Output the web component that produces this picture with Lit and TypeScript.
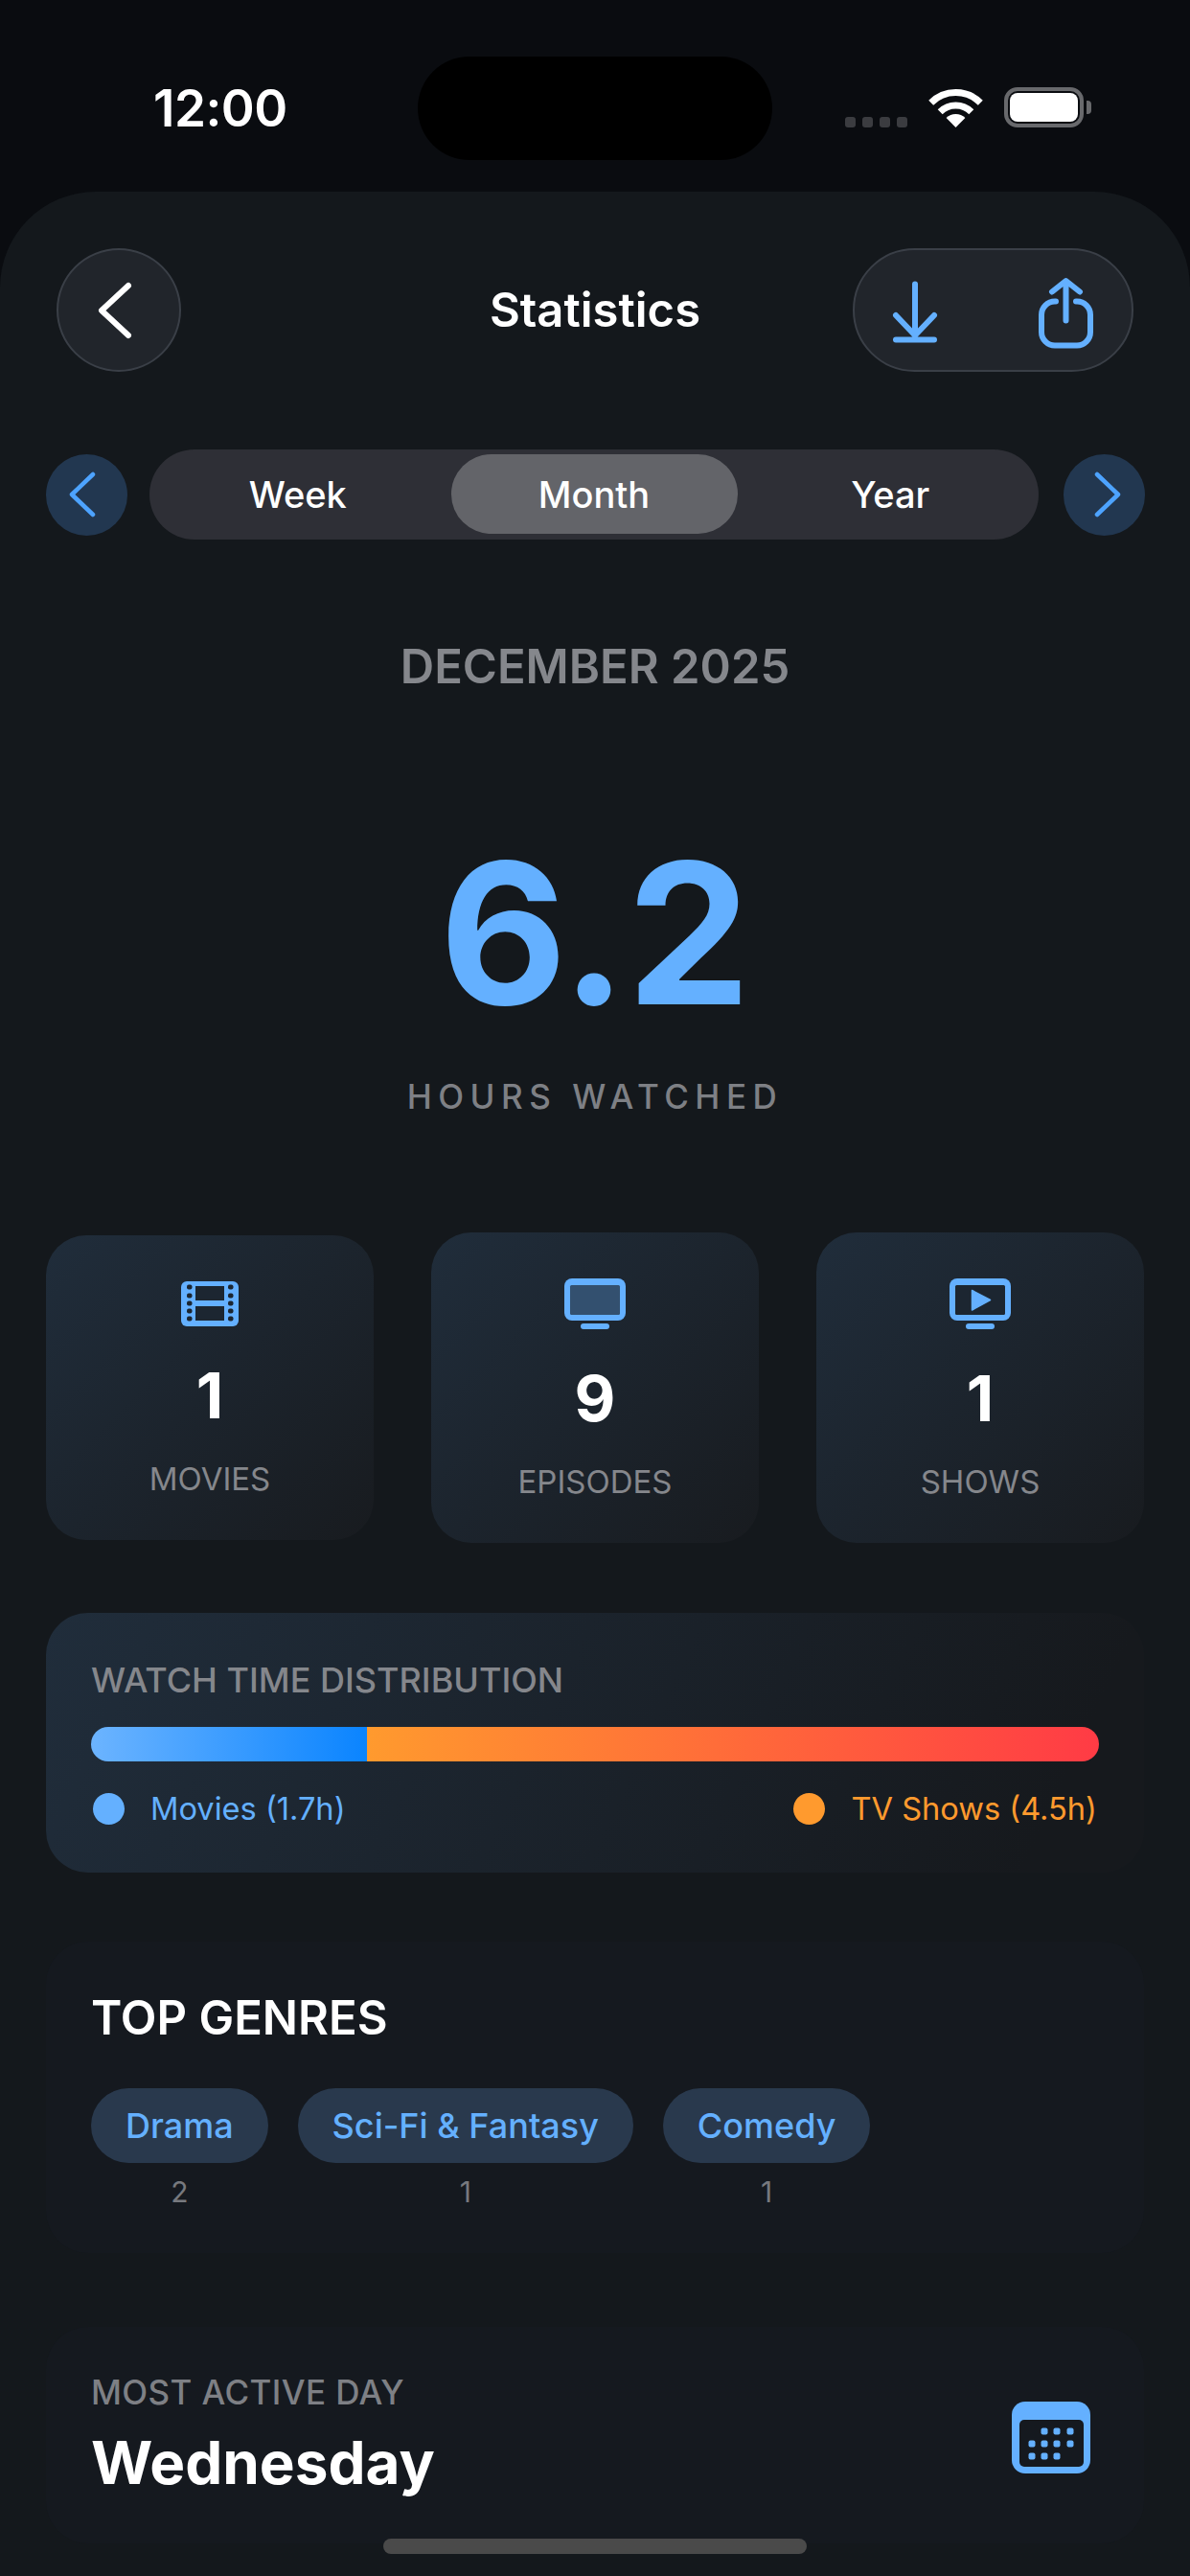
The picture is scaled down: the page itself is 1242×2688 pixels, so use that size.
import { LitElement, css, html, svg } from 'lit';
import { customElement } from 'lit/decorators.js';

const BLUE = '#64b0ff';

const filmIcon = html`<svg width="60" height="47" viewBox="0 0 60 47">
  <rect width="60" height="47" rx="6" fill=${BLUE} />
  <rect x="15" y="5" width="30" height="15" fill="#1c2631" />
  <rect x="15" y="26" width="30" height="15" fill="#1c2631" />
  ${[6, 15, 23, 31, 39].map(
    (y) => svg`<rect x="6" y=${y - 2.5} width="5.5" height="5" rx="2" fill="#1c2631" />
      <rect x="49" y=${y - 2.5} width="5.5" height="5" rx="2" fill="#1c2631" />`
  )}
</svg>`;

const tvIcon = (screen: string, play: boolean) => html`<svg width="64" height="53" viewBox="0 0 64 53">
  <rect width="64" height="44" rx="8" fill=${BLUE} />
  <rect x="6" y="7" width="52" height="31" rx="1.5" fill=${screen} />
  <rect x="17" y="47" width="30" height="6" rx="3" fill=${BLUE} />
  ${play ? svg`<path d="M23.5 12.5 L42.5 22.5 L23.5 33 Z" fill=${BLUE} stroke=${BLUE} stroke-width="1.5" stroke-linejoin="round" />` : ''}
</svg>`;

const stats = [
  { icon: filmIcon, value: '1', label: 'MOVIES' },
  { icon: tvIcon('#33506f', false), value: '9', label: 'EPISODES' },
  { icon: tvIcon('#1c2631', true), value: '1', label: 'SHOWS' },
];

const genres = [
  { name: 'Drama', count: 2 },
  { name: 'Sci-Fi & Fantasy', count: 1 },
  { name: 'Comedy', count: 1 },
];

const calendarDots = [
  [34, 31], [47, 31], [61, 31],
  [21, 44], [34, 44], [47, 44], [61, 44],
  [21, 57], [34, 57], [47, 57],
];

const movieHours = 1.7;
const totalHours = 6.2;

@customElement('app-root')
export class AppRoot extends LitElement {
  static styles = css`
    :host {
      display: block;
      position: relative;
      height: 2688px;
      overflow: hidden;
      background: #0a0c10;
      color: #fff;
      font-family: Inter, 'Noto Sans', sans-serif;
    }

    .status {
      height: 200px;
      box-sizing: border-box;
      padding: 59px 0 0 160px;
      display: flex;
      align-items: flex-start;
    }
    .time {
      width: 276px;
      font-size: 53px;
      line-height: 108px;
      font-weight: 600;
      letter-spacing: -0.5px;
    }
    .island {
      width: 370px;
      height: 108px;
      border-radius: 54px;
      background: #000;
    }
    .status-right {
      margin-left: 76px;
      height: 74px;
      display: flex;
      align-items: flex-end;
      gap: 22px;
    }
    .signal {
      display: flex;
      gap: 7px;
    }
    .signal i {
      width: 11px;
      height: 11px;
      border-radius: 3px;
      background: #3b3c40;
    }
    .battery {
      display: flex;
      align-items: center;
      gap: 3px;
    }
    .battery-body {
      width: 83px;
      height: 42px;
      box-sizing: border-box;
      padding: 2px;
      border: 4px solid #68696c;
      border-radius: 14px;
    }
    .battery-body i {
      display: block;
      height: 100%;
      border-radius: 8px;
      background: #fff;
    }
    .battery-nub {
      width: 5px;
      height: 14px;
      border-radius: 0 4px 4px 0;
      background: #68696c;
    }

    .sheet {
      height: 2488px;
      box-sizing: border-box;
      padding-top: 59px;
      border-radius: 100px 100px 0 0;
      background: #14181c;
    }

    .nav {
      display: flex;
      align-items: center;
      justify-content: space-between;
      padding: 0 59px;
    }
    .glass {
      height: 129px;
      box-sizing: border-box;
      border: 2px solid #3a3f47;
      background: #21252b;
      display: flex;
      align-items: center;
    }
    .back {
      width: 130px;
      border-radius: 50%;
      justify-content: center;
    }
    .title {
      font-size: 49px;
      line-height: 60px;
      font-weight: 600;
      flex: 1;
      text-align: center;
      padding-left: 163px;
    }
    .actions {
      width: 293px;
      border-radius: 65px;
      padding: 0 38px 0 36px;
      justify-content: space-between;
    }

    .range {
      margin-top: 81px;
      padding: 0 47px 0 48px;
      display: flex;
      align-items: center;
    }
    .step {
      width: 85px;
      height: 85px;
      border-radius: 50%;
      background: #223750;
      display: flex;
      align-items: center;
      justify-content: center;
    }
    .step.prev svg {
      margin-left: -9px;
    }
    .step.next svg {
      margin-left: 6px;
    }
    .segments {
      width: 928px;
      height: 94px;
      margin: 0 26px 0 23px;
      box-sizing: border-box;
      padding: 5px 8px 6px;
      border-radius: 47px;
      background: #2e2f36;
      display: grid;
      grid-template-columns: 1fr 299px 1fr;
      gap: 13px;
    }
    .segment {
      display: flex;
      align-items: center;
      justify-content: center;
      border-radius: 42px;
      font-size: 38px;
      font-weight: 500;
    }
    .segment.on {
      background: #636469;
    }

    .period {
      margin-top: 104px;
      text-align: center;
      font-size: 49px;
      line-height: 58px;
      font-weight: 600;
      color: #85878c;
    }
    .hours {
      margin-top: 128px;
      text-align: center;
      font-size: 205px;
      line-height: 240px;
      font-weight: 700;
      color: #64b0ff;
    }
    .hours-label {
      margin-top: 29px;
      text-align: center;
      font-size: 35px;
      line-height: 44px;
      font-weight: 500;
      letter-spacing: 6.5px;
      color: #7e8085;
    }

    .stats {
      margin-top: 120px;
      padding: 0 48px;
      display: grid;
      grid-template-columns: repeat(3, 342px);
      justify-content: space-between;
      align-items: center;
    }
    .stat {
      box-sizing: border-box;
      padding: 48px 0 44px;
      border-radius: 42px;
      background: linear-gradient(135deg, #202d3b, #181b1f);
      display: flex;
      flex-direction: column;
      align-items: center;
    }
    .stat-value {
      margin-top: 32px;
      font-size: 66px;
      line-height: 80px;
      font-weight: 700;
    }
    .stat-label {
      margin-top: 27px;
      font-size: 33px;
      line-height: 40px;
      color: #85878c;
    }

    .panel {
      margin: 0 48px;
      border-radius: 44px;
      padding: 0 47px;
    }
    .dist {
      margin-top: 73px;
      height: 271px;
      box-sizing: border-box;
      padding-top: 49px;
      background: linear-gradient(115deg, #202d3b, #16191d 90%);
    }
    .dist-title {
      font-size: 36px;
      line-height: 42px;
      font-weight: 500;
      color: #85878c;
    }
    .bar {
      margin-top: 28px;
      height: 36px;
      border-radius: 18px;
      overflow: hidden;
      display: flex;
    }
    .bar-movies {
      background: linear-gradient(90deg, #6cb4ff, #0a84ff);
    }
    .bar-tv {
      flex: 1;
      background: linear-gradient(90deg, #ff9a2e, #ff3b45);
    }
    .legend {
      margin-top: 29px;
      padding: 0 2px;
      display: flex;
      justify-content: space-between;
    }
    .legend-item {
      display: flex;
      align-items: center;
      gap: 27px;
      font-size: 32.6px;
      line-height: 40px;
    }
    .legend-item i {
      width: 33px;
      height: 33px;
      border-radius: 50%;
      background: currentColor;
    }
    .blue {
      color: #64b0ff;
    }
    .orange {
      color: #ff9a2e;
    }

    .genres {
      margin-top: 72px;
      height: 325px;
      box-sizing: border-box;
      padding-top: 50px;
      background: #15191f;
    }
    .genres-title {
      font-size: 49px;
      line-height: 60px;
      font-weight: 600;
    }
    .chips {
      margin-top: 43px;
      display: flex;
      gap: 31px;
    }
    .genre {
      display: flex;
      flex-direction: column;
      align-items: center;
    }
    .chip {
      height: 78px;
      padding: 0 36px;
      border-radius: 39px;
      background: #29394d;
      color: #64b0ff;
      font-size: 36px;
      line-height: 78px;
      font-weight: 500;
    }
    .count {
      margin-top: 12px;
      font-size: 30px;
      line-height: 36px;
      color: #77797e;
    }

    .active {
      margin-top: 77px;
      height: 226px;
      box-sizing: border-box;
      padding: 47px 56px 0 47px;
      background: #15191f;
      display: flex;
      justify-content: space-between;
      align-items: flex-start;
    }
    .active-label {
      font-size: 35px;
      line-height: 42px;
      font-weight: 500;
      letter-spacing: 0.4px;
      color: #7e8085;
    }
    .active-day {
      margin-top: 14px;
      font-size: 62px;
      line-height: 78px;
      font-weight: 700;
    }
    .active svg {
      margin-top: 31px;
    }

    .home {
      position: absolute;
      left: 400px;
      top: 2649px;
      width: 442px;
      height: 16px;
      border-radius: 8px;
      background: #4a4a4a;
    }
  `;

  render() {
    const moviePct = (movieHours / totalHours) * 100;
    return html`
      <div class="status">
        <div class="time">12:00</div>
        <div class="island"></div>
        <div class="status-right">
          <div class="signal"><i></i><i></i><i></i><i></i></div>
          <svg width="57" height="41" viewBox="0 0 57 41" fill="none" stroke="#fff" stroke-width="7">
            <path d="M2.7 15.2A36.5 36.5 0 0 1 54.3 15.2" />
            <path d="M12.2 24.7A23 23 0 0 1 44.8 24.7" />
            <path d="M28.5 41L18.6 31.1A14 14 0 0 1 38.4 31.1Z" fill="#fff" stroke="none" />
          </svg>
          <div class="battery">
            <div class="battery-body"><i></i></div>
            <div class="battery-nub"></div>
          </div>
        </div>
      </div>

      <div class="sheet">
        <div class="nav">
          <div class="glass back">
            <svg width="46" height="64" viewBox="0 0 46 64" fill="none" stroke="#fff" stroke-width="6" stroke-linecap="round" stroke-linejoin="round">
              <path d="M33 6L5 32L33 58" />
            </svg>
          </div>
          <div class="title">Statistics</div>
          <div class="glass actions">
            <svg width="54" height="68" viewBox="0 0 54 68" fill="none" stroke="#64b0ff" stroke-width="6" stroke-linecap="round" stroke-linejoin="round">
              <path d="M27 6.5V60M7 39L27 60L47 39M7 64.5H47" />
            </svg>
            <svg width="60" height="80" viewBox="0 0 60 80" fill="none" stroke="#64b0ff" stroke-width="6" stroke-linecap="round" stroke-linejoin="round">
              <path d="M19 30.5H18A14 14 0 0 0 4 44.5V62.5A14 14 0 0 0 18 76.5H41A14 14 0 0 0 55 62.5V44.5A14 14 0 0 0 41 30.5H40" />
              <path d="M29.5 50.5V11.5M15 20.5L29.5 9L44 20.5" />
            </svg>
          </div>
        </div>

        <div class="range">
          <div class="step prev">
            <svg width="30" height="48" viewBox="0 0 30 48" fill="none" stroke="#4da3ff" stroke-width="4.5" stroke-linecap="round" stroke-linejoin="round">
              <path d="M26 3L4 24L26 45" />
            </svg>
          </div>
          <div class="segments">
            <div class="segment">Week</div>
            <div class="segment on">Month</div>
            <div class="segment">Year</div>
          </div>
          <div class="step next">
            <svg width="30" height="48" viewBox="0 0 30 48" fill="none" stroke="#4da3ff" stroke-width="4.5" stroke-linecap="round" stroke-linejoin="round">
              <path d="M4 3L26 24L4 45" />
            </svg>
          </div>
        </div>

        <div class="period">DECEMBER 2025</div>
        <div class="hours">6.2</div>
        <div class="hours-label">HOURS WATCHED</div>

        <div class="stats">
          ${stats.map(
            (s) => html`<div class="stat">
              ${s.icon}
              <div class="stat-value">${s.value}</div>
              <div class="stat-label">${s.label}</div>
            </div>`
          )}
        </div>

        <div class="panel dist">
          <div class="dist-title">WATCH TIME DISTRIBUTION</div>
          <div class="bar">
            <div class="bar-movies" style="width:${moviePct}%"></div>
            <div class="bar-tv"></div>
          </div>
          <div class="legend">
            <div class="legend-item blue"><i></i>Movies (1.7h)</div>
            <div class="legend-item orange"><i></i>TV Shows (4.5h)</div>
          </div>
        </div>

        <div class="panel genres">
          <div class="genres-title">TOP GENRES</div>
          <div class="chips">
            ${genres.map(
              (g) => html`<div class="genre">
                <div class="chip">${g.name}</div>
                <div class="count">${g.count}</div>
              </div>`
            )}
          </div>
        </div>

        <div class="panel active">
          <div>
            <div class="active-label">MOST ACTIVE DAY</div>
            <div class="active-day">Wednesday</div>
          </div>
          <svg width="82" height="75" viewBox="0 0 82 75">
            <rect width="82" height="75" rx="14" fill="#64b0ff" />
            <rect x="8" y="19" width="67" height="49" rx="5" fill="#15191f" />
            ${calendarDots.map(
              ([x, y]) => svg`<rect x=${x - 3.5} y=${y - 3.5} width="7" height="7" rx="2" fill="#64b0ff" />`
            )}
          </svg>
        </div>
      </div>

      <div class="home"></div>
    `;
  }
}
